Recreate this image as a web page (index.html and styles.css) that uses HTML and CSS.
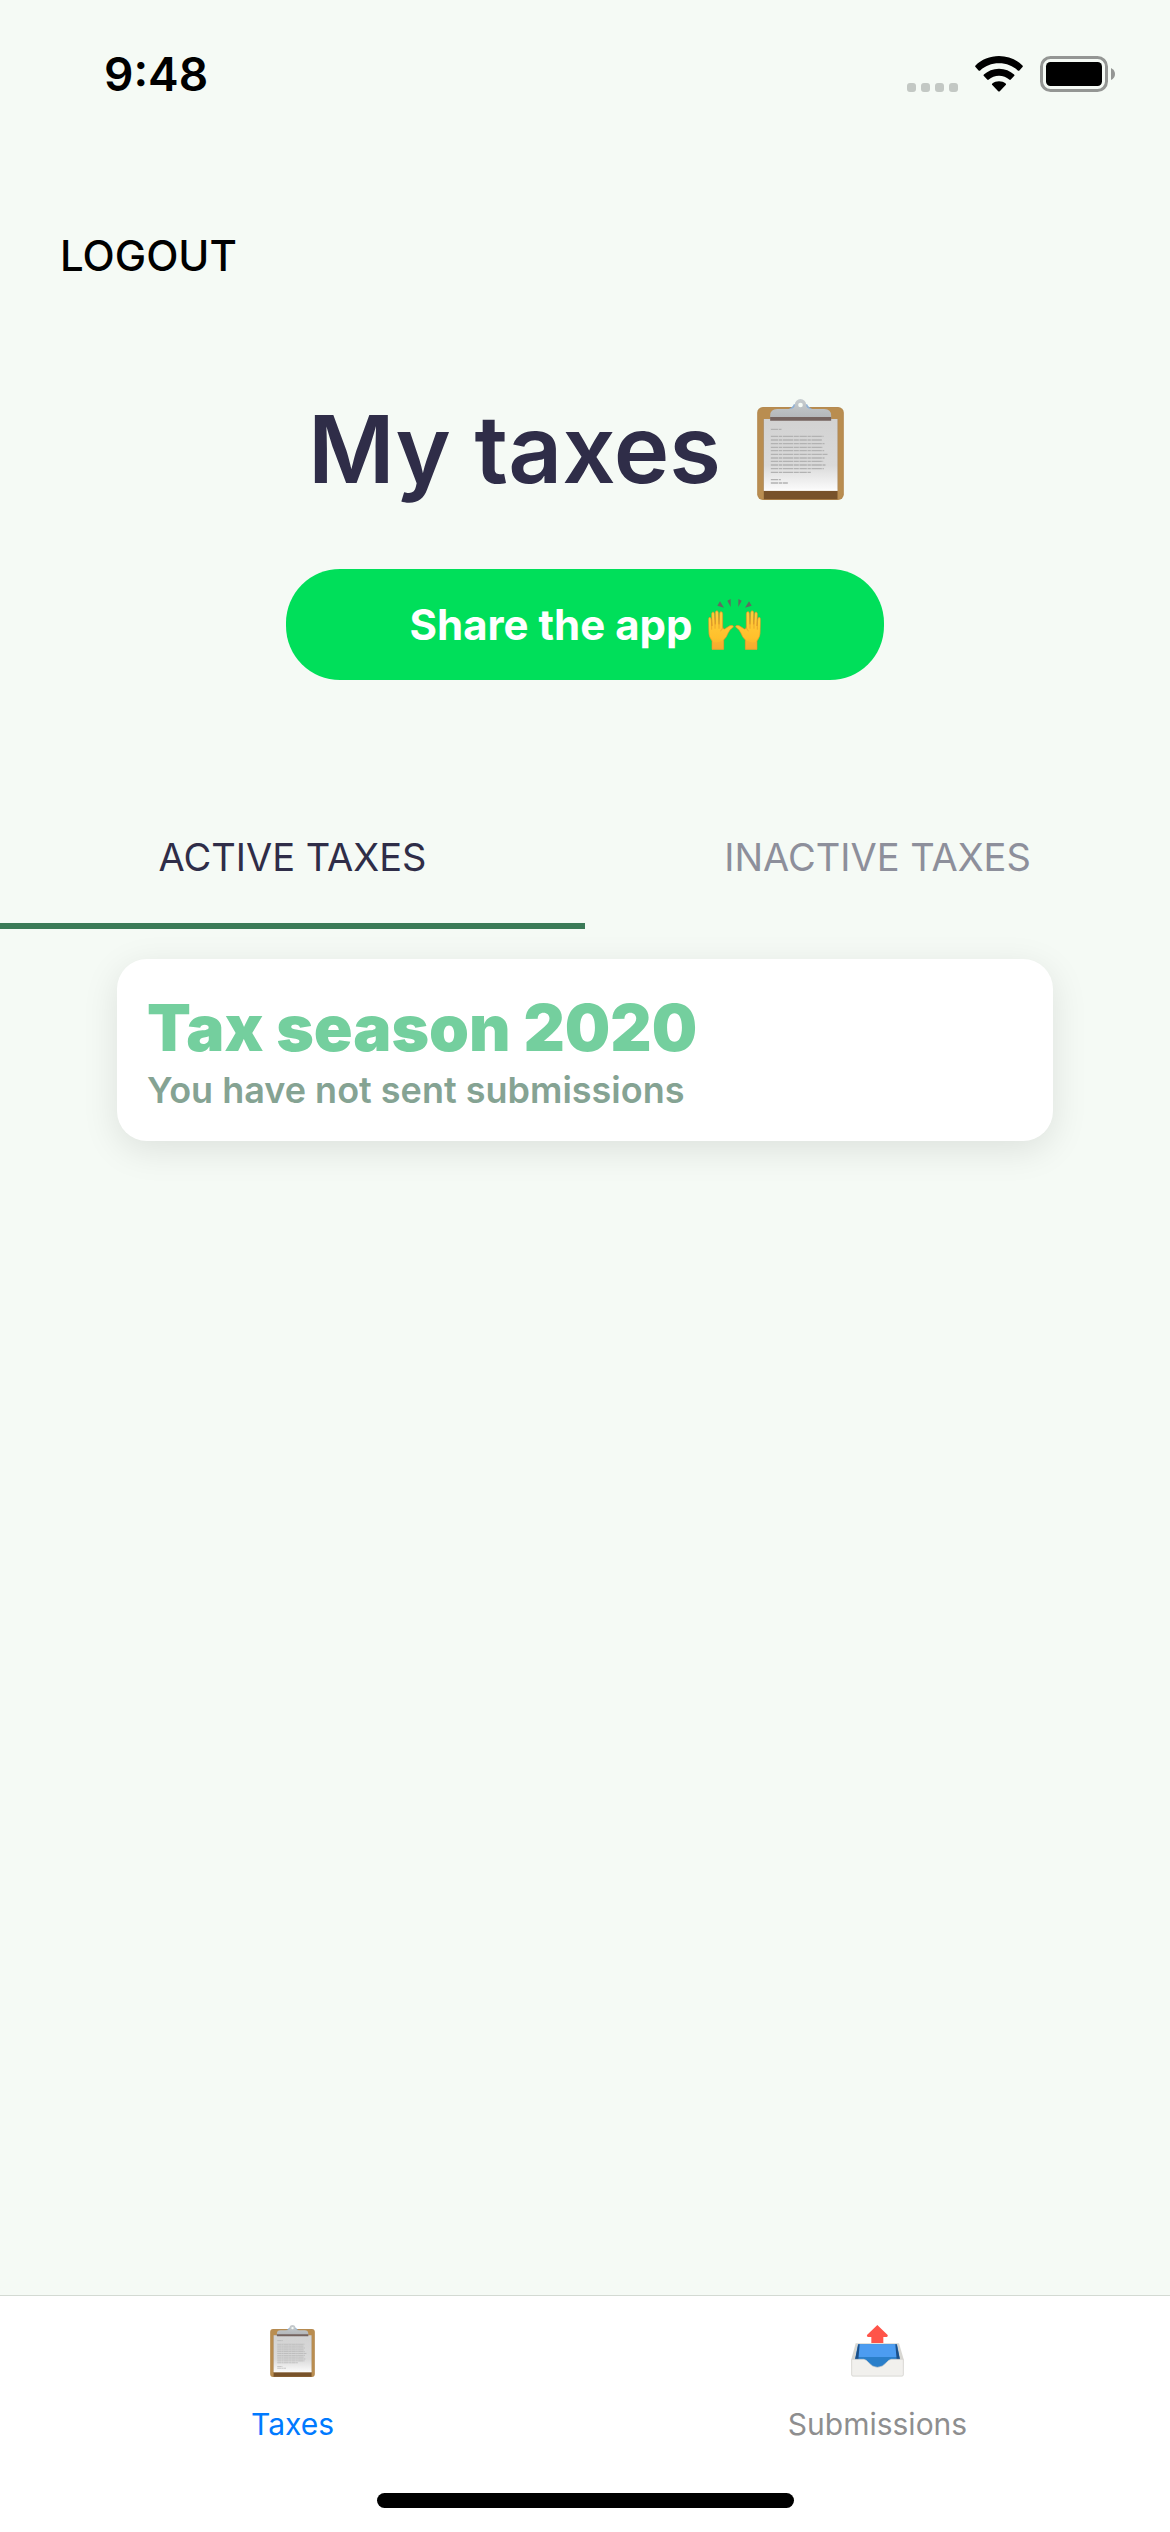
FILE: index.html
```html
<!DOCTYPE html>
<html lang="en">
<head>
<meta charset="utf-8">
<meta name="viewport" content="width=device-width">
<title>My taxes</title>
<link rel="stylesheet" href="styles.css">
</head>
<body>
<svg class="sprite" aria-hidden="true">
  <defs>
    <linearGradient id="paper" x1="0" y1="0" x2="0" y2="1">
      <stop offset="0" stop-color="#d2d2d2"/><stop offset="0.65" stop-color="#dadada"/><stop offset="1" stop-color="#fbfbfb"/>
    </linearGradient>
    <linearGradient id="clip" x1="0" y1="0" x2="0" y2="1">
      <stop offset="0" stop-color="#c6cccf"/><stop offset="1" stop-color="#b2b5b8"/>
    </linearGradient>
    <linearGradient id="skin" x1="0" y1="0" x2="0" y2="1">
      <stop offset="0" stop-color="#ffcf3d"/><stop offset="0.7" stop-color="#ffc02c"/><stop offset="1" stop-color="#f5ad2c"/>
    </linearGradient>
    <symbol id="clipboard" viewBox="0 0 260 303">
      <rect y="24" width="260" height="279" rx="17" fill="#b58a50"/>
      <rect x="4" y="27" width="252" height="272" rx="14" fill="#b98d50"/>
      <path d="M20 272H241V301H20Z" fill="#78522a"/>
      <path d="M18 60H243V275H18Z" fill="#a8865a"/>
      <path d="M20 60H241V274H20Z" fill="url(#paper)"/>
      <path d="M20 274H241" stroke="#fff" stroke-width="3"/>
      <path d="M88 32Q106 28 110 16H150Q154 28 172 32Z" fill="#8fb0d4"/>
      <path d="M39 60V50Q39 30 60 30H100Q113 28 113 17A17 17 0 0 1 147 17Q147 28 160 30H201Q222 30 222 50V60Z" fill="url(#clip)"/>
      <path d="M39 54H222V65H39Z" fill="#74635f"/>
      <circle cx="130" cy="18" r="7" fill="#f5faf5"/>
      <g stroke="#b2b2b2" stroke-width="4" fill="none" stroke-dasharray="22 2 10 2 31 2 15 2">
        <path d="M41 91H73M41 112H199M41 123H196M41 134H202M41 145H197M41 155H201M41 166H211M41 177H202M41 187H198M41 198H205M41 209H200M41 220H163M41 242H71M41 252H92"/>
      </g>
    </symbol>
    <symbol id="hand" viewBox="0 0 80 153">
      <path d="M11 151V126Q0 112 1 96L0 61Q1 54 5 55Q8 56 9 63L11 81L10 44Q11 39 14 39Q18 39 18 45L21 76L21 40Q22 35 26 35Q30 36 30 41L32 76L34 43Q35 37 39 38Q43 39 43 45L43 83Q44 91 49 90L58 84Q66 77 74 80Q78 83 72 87Q65 91 60 101Q55 115 46 123V151Z" fill="url(#skin)" stroke="#de9228" stroke-width="2"/>
      <path d="M10 61V92M20 54V89M32 55V89M43 83Q43 93 36 96" fill="none" stroke="#e3952c" stroke-width="2"/>
      <path d="M11 128Q28 134 46 124V153H11Z" fill="#f3a832" opacity="0.45"/>
    </symbol>
    <symbol id="raised-hands" viewBox="0 0 157 153">
      <use href="#hand" width="80" height="153"/>
      <use href="#hand" width="80" height="153" transform="translate(157 0) scale(-1 1)"/>
      <path d="M35 7L47 26L27 20ZM57 5L67 0V24ZM100 5L90 0V24ZM122 7L110 26L130 20Z" fill="#616b61"/>
    </symbol>
    <symbol id="outbox" viewBox="0 0 159 156">
      <path d="M79 0L110 30Q112 35 107 36H97V54H61V36H51Q46 35 48 30Z" fill="#ff5449"/>
      <path d="M14 55H144L158 103L157 150Q157 154 153 154H6Q2 154 2 150L1 103Z" fill="#d8d7d2"/>
      <path d="M21 58H138L147 104L120 132H40L12 104Z" fill="#2a7fca"/>
      <path d="M22 58H137L141 96H18Z" fill="#4c9cf1"/>
      <path d="M22 58L12 104H22L26 58ZM137 58L147 104H137L133 58Z" fill="#1c4f88"/>
      <path d="M2 103H38Q46 104 52 112Q64 127 79 127Q95 127 107 112Q113 104 121 103H157V150Q157 153 153 153H6Q2 153 2 150Z" fill="#f1f0ed" stroke="#d3d2cd" stroke-width="2"/>
    </symbol>
  </defs>
</svg>

<div class="app">
  <header class="status-bar">
    <span class="clock">9:48</span>
    <div class="indicators">
      <svg class="signal" viewBox="0 0 51 9" aria-label="No signal"><g fill="#c3c8c4"><rect width="9" height="9" rx="3"/><rect x="14" width="9" height="9" rx="3"/><rect x="28" width="9" height="9" rx="3"/><rect x="42" width="9" height="9" rx="3"/></g></svg>
      <svg class="wifi" viewBox="0 0 48 36" aria-label="Wi-Fi"><path d="M24 0C15 0 6.500 3.500.5 9.400Q-.2 10.300.5 11L3.600 14.500Q4.400 15.200 5.200 14.500C10 10 16.500 7.300 24 7.300S38 10 42.800 14.500Q43.600 15.200 44.400 14.500L47.500 11Q48.200 10.300 47.500 9.400C41.500 3.500 33 0 24 0ZM24 12.700C18 12.700 12.800 15 8.900 18.500Q8.100 19.300 8.900 20.100L12.200 23.600Q13 24.300 13.800 23.600C16.500 21.200 20 19.800 24 19.800S31.500 21.200 34.200 23.600Q35 24.300 35.800 23.600L39.100 20.100Q39.900 19.300 39.100 18.500C35.200 15 30 12.700 24 12.700ZM24 25.200C21.500 25.200 19.200 26 17.300 27.500Q16.500 28.300 17.300 29.100L23.200 35.200Q24 36 24.800 35.200L30.700 29.100Q31.500 28.300 30.700 27.500C28.800 26 26.500 25.200 24 25.200Z"/></svg>
      <svg class="battery" viewBox="0 0 76 36" aria-label="Battery full"><rect x="1.500" y="1.500" width="65" height="33" rx="9" fill="none" stroke="#949694" stroke-width="3"/><rect x="6" y="6" width="56" height="24" rx="4.500"/><path d="M71 12Q75 14 75 18T71 24Z" fill="#949694"/></svg>
    </div>
  </header>

  <main class="content">
    <button class="logout" type="button">LOGOUT</button>
    <div class="hero">
      <h1 class="title">My taxes <svg class="title-icon" aria-hidden="true"><use href="#clipboard"/></svg></h1>
      <button class="share" type="button">Share the app <svg class="share-icon" aria-hidden="true"><use href="#raised-hands"/></svg></button>
    </div>
    <div class="tabs" role="tablist">
      <button class="tab tab-active" type="button" role="tab" aria-selected="true">ACTIVE TAXES</button>
      <button class="tab" type="button" role="tab" aria-selected="false">INACTIVE TAXES</button>
    </div>
    <article class="card">
      <h2 class="card-title">Tax season 2020</h2>
      <p class="card-text">You have not sent submissions</p>
    </article>
  </main>

  <footer class="bottom">
    <nav class="nav">
      <a class="nav-item nav-current" href="#taxes"><svg class="nav-icon" aria-hidden="true"><use href="#clipboard"/></svg>Taxes</a>
      <a class="nav-item" href="#submissions"><svg class="nav-icon" aria-hidden="true"><use href="#outbox"/></svg>Submissions</a>
    </nav>
    <div class="home-indicator"></div>
  </footer>
</div>
</body>
</html>
```
FILE: styles.css
```css
* { box-sizing: border-box; }
body { margin: 0; background: #f5faf5; color: #000; font-family: Inter, "Liberation Sans", sans-serif; }
h1, h2, p { margin: 0; }
button { margin: 0; padding: 0; border: 0; background: none; color: inherit; font-family: inherit; cursor: pointer; }
svg { display: block; flex: none; }
.sprite { position: absolute; width: 0; height: 0; }

.app { display: flex; flex-direction: column; min-height: 100vh; }

.status-bar { display: flex; justify-content: space-between; align-items: center; padding: 44px 54px 0 104px; }
.clock { font-size: 46px; font-weight: 600; line-height: 60px; }
.indicators { display: flex; align-items: flex-end; gap: 17px; }
.signal { width: 51px; height: 9px; }
.wifi { width: 48px; height: 36px; }
.battery { width: 76px; height: 36px; }

.content { flex: 1; display: flex; flex-direction: column; padding-top: 122px; }
.logout { align-self: flex-start; margin-left: 60px; font-size: 42px; font-weight: 500; line-height: 60px; }

.hero { display: flex; flex-direction: column; align-items: center; gap: 60px; padding-top: 103px; }
.title { display: flex; align-items: center; gap: 36px; padding-right: 18px; color: #2f2d48; font-size: 94px; font-weight: 600; line-height: 120px; }
.title-icon { width: 87px; height: 101px; }
.share { display: flex; align-items: center; justify-content: center; gap: 15px; width: 598px; max-width: 100%; height: 111px; border-radius: 54px; background: #00df5a; color: #fff; font-size: 42px; font-weight: 700; }
.share-icon { width: 53px; height: 51px; }

.tabs { display: flex; margin-top: 111px; }
.tab { flex: 1; padding: 42px 0; border-bottom: 6px solid transparent; color: #8d8f9b; font-size: 38px; line-height: 48px; }
.tab-active { border-color: #3b7a57; color: #2f2d48; }

.card { margin: 30px 10% 0; padding: 32px 30px 26px; border-radius: 30px; background: #fff; box-shadow: 0 9px 36px rgba(0, 0, 0, 0.1); }
.card-title { color: #74cf9e; font-size: 64px; font-weight: 900; line-height: 74px; }
.card-text { color: #85a393; font-size: 36px; font-weight: 600; line-height: 50px; }

.bottom { border-top: 1px solid #d3dad3; background: #fff; padding: 29px 0 24px; }
.nav { display: flex; }
.nav-item { flex: 1; display: flex; flex-direction: column; align-items: center; gap: 27px; color: #8e8e8f; font-size: 30px; line-height: 40px; text-decoration: none; }
.nav-current { color: #007aff; }
.nav-icon { width: 53px; height: 52px; }
.home-indicator { width: 417px; height: 15px; margin: 49px auto 0; border-radius: 8px; background: #000; }
```
